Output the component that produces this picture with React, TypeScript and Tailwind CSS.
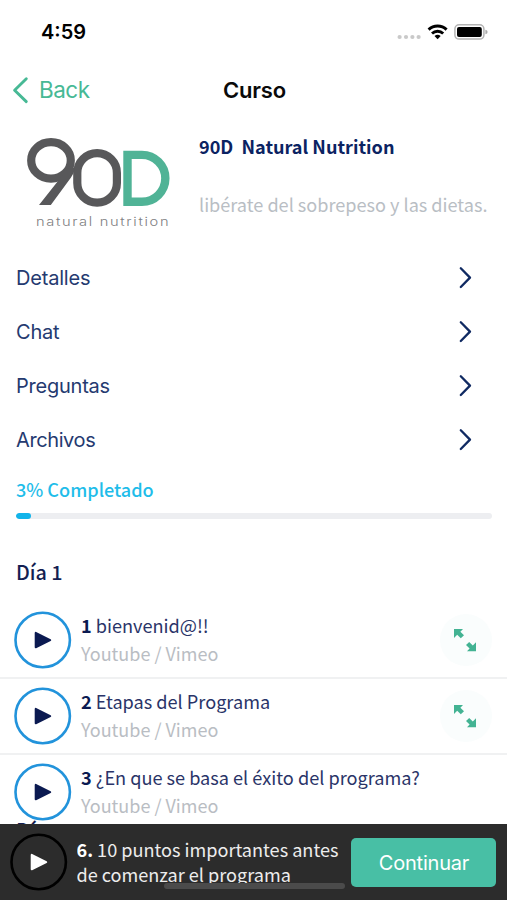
import React from "react";

const SF = "font-['Inter','Liberation_Sans',sans-serif]";
const SOURCE = "font-['Noto_Sans_CJK_JP','Noto_Sans',sans-serif]";

const menu = [
  { label: "Detalles", tracking: "tracking-[-0.2px]" },
  { label: "Chat", tracking: "tracking-[-0.2px]" },
  { label: "Preguntas", tracking: "tracking-[-0.23px]" },
  { label: "Archivos", tracking: "tracking-[-0.4px]" },
];

const lessons = [
  { n: 1, title: "bienvenid@!!", expandable: true },
  { n: 2, title: "Etapas del Programa", expandable: true },
  { n: 3, title: "¿En que se basa el éxito del programa?", expandable: false },
];

function StatusBar() {
  return (
    <div className="flex h-[60px] shrink-0 items-center justify-between pl-[41px] pr-[19px] pt-1">
      <span className="text-[20px] font-semibold leading-6 text-black">4:59</span>
      <svg width="92" height="20" viewBox="0 0 92 20">
        <g fill="#c9c9c9">
          <circle cx="3.6" cy="15" r="2.1" />
          <circle cx="10" cy="15" r="2.1" />
          <circle cx="16.4" cy="15" r="2.1" />
          <circle cx="22.6" cy="15" r="2.1" />
        </g>
        <g fill="none" stroke="#000" strokeWidth="2.9">
          <path d="M32.6 7.6a13 13 0 0 1 18 0" />
          <path d="M36 11.5a8.2 8.2 0 0 1 11.2 0" />
        </g>
        <path d="M38.5 14.1a4.6 4.6 0 0 1 6.2 0L41.6 17.3Z" fill="#000" />
        <rect x="58.9" y="2.7" width="29" height="14.4" rx="4.2" fill="none" stroke="#b3b3b3" strokeWidth="1.5" />
        <rect x="61" y="4.9" width="24.8" height="10" rx="2" fill="#000" />
        <path d="M89.4 7.7q2.2.6 2.2 2.3t-2.2 2.3Z" fill="#aaa" />
      </svg>
    </div>
  );
}

function NavBar() {
  return (
    <div className="grid h-[60px] shrink-0 grid-cols-3 items-center pl-[13px] pr-[11px]">
      <div className="-ml-px flex items-center gap-[10px] text-[#47b995]">
        <svg width="17" height="28" viewBox="0 0 17 28" fill="none" stroke="currentColor" strokeWidth="2.9" strokeLinecap="round" strokeLinejoin="round">
          <path d="M14.3 2.8 2.6 14.2 14.3 25.6" />
        </svg>
        <span className="text-[22.5px] leading-7 tracking-[-0.5px]">Back</span>
      </div>
      <span className="text-center text-[22px] font-semibold leading-7 tracking-[-0.2px] text-[#0a0a0a]">Curso</span>
    </div>
  );
}

function Logo() {
  return (
    <svg width="151" height="96" viewBox="0 0 151 96" className="mt-px shrink-0">
      <g fill="none" stroke="#58585a" strokeWidth="8.2">
        <ellipse cx="31" cy="25.4" rx="19.8" ry="18.3" />
        <rect x="57.3" y="18.1" width="39.6" height="49.6" rx="19.8" />
      </g>
      <path d="M38 46 19 70h11.8L51 42.5q3-4 4-9L50 31Z" fill="#58585a" />
      <path d="M107.5 19.9h14.4a23.45 23.45 0 0 1 0 46.9h-14.4Z" fill="none" stroke="#50b396" strokeWidth="8.4" />
      <g transform="translate(15.9 91) scale(1.18 1)">
        <text textLength="112.4" fontSize="12.4" fontWeight="300" fill="#808082">
          natural nutrition
        </text>
      </g>
    </svg>
  );
}

function PlayButton({ ring, glyph }: { ring: string; glyph: string }) {
  return (
    <svg width="58" height="58" viewBox="0 0 58 58" className="shrink-0" aria-label="play">
      <circle cx="28.7" cy="29" r="27.2" fill="none" strokeWidth="2.6" className={ring} />
      <path d="M21.7 21.9v14.4l14.5-7.2Z" strokeWidth="2" strokeLinejoin="round" className={glyph} />
    </svg>
  );
}

function ExpandIcon() {
  return (
    <div className="flex size-[52px] items-center justify-center rounded-full bg-[#fafdfd]">
      <svg width="24" height="24" viewBox="0 0 24 24" fill="#43b393">
        <path d="M0 1h9L6.4 3.7 10 7.2 6.8 10.3 3.2 6.8 0 10Z" />
        <path d="M22 23.2h-9l2.6-2.7-3.6-3.5 3.2-3.1 3.6 3.5L22 14.2Z" />
      </svg>
    </div>
  );
}

export default function App() {
  return (
    <div className={`relative flex h-[900px] w-[507px] flex-col overflow-hidden bg-white ${SF}`}>
      <StatusBar />
      <NavBar />

      <main className="min-h-0 flex-1 overflow-hidden">
        <section className="flex h-[130px] pl-5 pt-[14px]">
          <Logo />
          <div className={`ml-7 whitespace-pre ${SOURCE}`}>
            <h1 className="text-[18.1px] font-bold leading-[24px] text-[#0b2362]">90D  Natural Nutrition</h1>
            <p className="mt-[34px] text-[18.1px] leading-[24px] text-[#b9bec4]">libérate del sobrepeso y las dietas.</p>
          </div>
        </section>

        <nav>
          {menu.map((m) => (
            <div key={m.label} className="flex h-[54px] items-center justify-between pl-4 pr-[34px]">
              <span className={`pt-[2px] text-[20px] leading-6 text-[#253a70] ${m.tracking}`}>{m.label}</span>
              <svg width="16" height="24" viewBox="0 0 16 24" fill="none" stroke="#102a62" strokeWidth="2.3" strokeLinecap="round" strokeLinejoin="round">
                <path d="M3.8 3.2 13 12.6 3.8 22" />
              </svg>
            </div>
          ))}
        </nav>

        <section className={`px-4 pr-[15px] pt-[11px] ${SOURCE}`}>
          <p className="text-[18.1px] font-medium leading-6 text-[#1fbdea]">3% Completado</p>
          <div className="mt-[12px] h-[6px] overflow-hidden rounded-full bg-[#edeef1]">
            <div className="h-full w-[15px] rounded-full bg-[#12b4ea]" />
          </div>
          <h2 className="mt-[39px] text-[19.8px] font-medium leading-7 text-[#141f52]">Día 1</h2>
        </section>

        <ul className={`mt-[17px] ${SOURCE}`}>
          {lessons.map((l) => (
            <li key={l.n} className="flex h-[76px] items-center border-b-2 border-[#f0f1f2] pl-[14px] pr-[15px]">
              <PlayButton ring="stroke-[#2293db]" glyph="fill-[#0b1a51] stroke-[#0b1a51]" />
              <div className="ml-[9px] flex-1 whitespace-nowrap pb-[2px]">
                <p className="text-[18.15px] leading-7 text-[#2a3468]">
                  <span className="font-bold text-[#0b1a51]">{l.n}</span> {l.title}
                </p>
                <p className="text-[18px] leading-7 text-[#b9bdc3]">Youtube / Vimeo</p>
              </div>
              {l.expandable && <ExpandIcon />}
            </li>
          ))}
        </ul>
        <h2 className={`-mt-[15px] pl-4 text-[19.8px] font-medium leading-7 text-[#141f52] ${SOURCE}`}>Día 2</h2>
      </main>

      <footer className="flex h-[76px] shrink-0 items-center bg-[#2c2c2c] pl-[10px] pr-[11px]">
        <PlayButton ring="stroke-black" glyph="fill-white stroke-white" />
        <p className={`mb-[4px] ml-[8.5px] h-[46px] flex-1 overflow-hidden whitespace-nowrap text-[18.1px] leading-[25px] text-[#ededed] ${SOURCE}`}>
          <span className="font-bold text-white">6.</span> 10 puntos importantes antes
          <br />
          de comenzar el programa
        </p>
        <button className="h-[49px] w-[145px] rounded-[5px] bg-[#48bfa5] pl-px pt-[2px] text-[20px] leading-6 tracking-[-0.2px] text-white">Continuar</button>
      </footer>
      <div className="absolute bottom-[11px] left-[164px] h-[6px] w-[181px] rounded-full bg-[#4b4b4b]" />
    </div>
  );
}
